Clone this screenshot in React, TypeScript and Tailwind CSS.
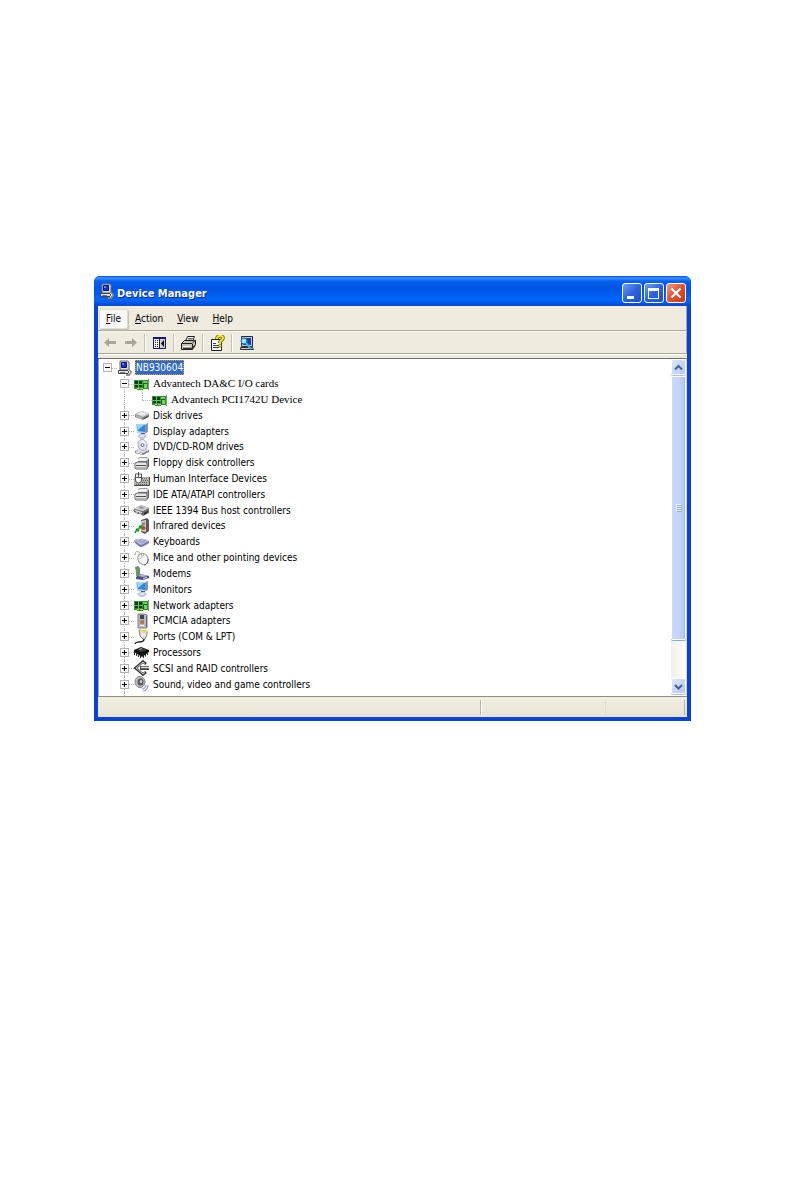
import type { ReactNode } from 'react';

type IconName =
  | 'computer'
  | 'card'
  | 'disk'
  | 'monitor'
  | 'cdrom'
  | 'controller'
  | 'hid'
  | 'firewire'
  | 'infrared'
  | 'keyboard'
  | 'mouse'
  | 'modem'
  | 'pcmcia'
  | 'port'
  | 'processor'
  | 'scsi'
  | 'sound';

const shapes: Record<IconName, ReactNode> = {
  computer: (
    <>
      <path d="M3 1h8l1 1v8H3z" fill="#dcdad2" stroke="#66666e" />
      <path d="M4.500 2.500h5v5h-5z" fill="#1030d8" stroke="#08106c" />
      <path d="M5 3h2v2H5z" fill="#6a88f8" />
      <path d="M1.500 10.500h10v3h-10z" fill="#e2dfd6" stroke="#44444a" />
      <path d="M3 12.500h5" stroke="#77777c" />
      <path d="M11 9l3 3-2 3h-3" fill="none" stroke="#8e8e8e" strokeWidth="2" />
      <path d="M11 10l2 2-2 2" fill="none" stroke="#f0f0f0" />
    </>
  ),
  card: (
    <>
      <path d="M0 4h14v9H9v1H3v-1H0z" fill="#2c9236" />
      <path d="M1 5h3v3H1zM5 5h3v3H5zM1 9h3v2H1zM5 9h3v2H5z" fill="#0e3a16" />
      <path d="M9 5h4v2H9zM10 8h3v4h-3z" fill="#74d452" />
      <path d="M0 8.500h9M4.500 4v8" stroke="#5fc05c" />
      <path d="M9 7.500h4M9.500 8v4" stroke="#14602a" />
      <path d="M14.500 3v11" stroke="#8d938d" />
      <path d="M3 12.500h2M6 12.500h3" stroke="#d8d04c" />
    </>
  ),
  disk: (
    <>
      <path d="M1 7l7-3 7 3v3l-6 3-8-3z" fill="#88888c" />
      <path d="M1 7l7-3 7 3-6 3z" fill="#d6d6d8" />
      <path d="M2 8l6 2v2L2 10z" fill="#b5b5b8" />
      <path d="M10 11l4-2v1l-4 2z" fill="#444" />
      <path d="M4 7l4-2 4 2-3 1z" fill="#f8f8f8" />
    </>
  ),
  monitor: (
    <>
      <path d="M2 1l9 0 3-1v9l-4 2-7-1z" fill="#b7cbe4" />
      <path d="M3 2h8v7l-7-1z" fill="#2e86e8" />
      <path d="M3 2h7L4 7z" fill="#86dcfa" />
      <path d="M11 2l3-2v9l-3 1z" fill="#8495b2" />
      <path d="M6 11h5l2 2-3 3H6l-3-3z" fill="#c4c8d8" />
      <path d="M6 13h4" stroke="#fff" />
      <path d="M7 10.500h4" stroke="#565e90" />
    </>
  ),
  cdrom: (
    <>
      <path d="M1 12l5-3 9 2v2l-6 3-8-2z" fill="#85858c" />
      <path d="M1 12l5-3 9 2-6 3z" fill="#dedee2" />
      <path d="M8 .5c3 0 5 3 5 6s-2 5-4 5-5-2-5-6 2-5 4-5z" fill="#dfe1f6" stroke="#a4a6bc" />
      <path d="M8 6V1a5 5 0 0 1 4 4z" fill="#fbfbff" />
      <circle cx="8.500" cy="6" r="1.500" fill="#fff" stroke="#7375a8" />
      <path d="M2 13l6 1.500" stroke="#fafafa" />
    </>
  ),
  controller: (
    <>
      <path d="M4 3l2-1h7l2 2v7l-2 2H4z" fill="#9a9a9c" />
      <path d="M4 4l2-1h7l1 1-2 2H3z" fill="#f0f0f0" />
      <path d="M4 6.500h9" stroke="#606064" />
      <path d="M1 8l3-1h8l1 2v5H2l-1-1z" fill="#e4e4e4" stroke="#6e6e70" />
      <path d="M2 10.500h10" stroke="#505054" />
      <path d="M2 12.500h10" stroke="#b8b8ba" />
      <path d="M14.500 4v7l-1 2" fill="none" stroke="#606064" />
    </>
  ),
  hid: (
    <>
      <path d="M0 6h15v8H0z" fill="#b2b2ae" />
      <path d="M8 7.500h6M9 9.500h6M8 11.500h6M2 13.500h12" stroke="#62625e" strokeDasharray="1 1" />
      <path d="M1.500 3h6v6a3 3 0 0 1-6 0z" fill="#fafafa" stroke="#555" />
      <path d="M4.500 1v5M2 6.500h5" fill="none" stroke="#555" />
      <path d="M0 14.500h15.500V6" fill="none" stroke="#4c4c4a" />
    </>
  ),
  firewire: (
    <>
      <path d="M0 7l7-4 8 3v5l-6 3-3-2H4l-4-2z" fill="#6c6c70" />
      <path d="M0 7l7-4 8 3-6 3z" fill="#d2d2d4" />
      <path d="M4 6l3-2 4 2-3 1z" fill="#9a9a9c" />
      <path d="M1 8l7 2v1L1 9z" fill="#ececee" />
      <path d="M10 11l4-2v1l-4 3z" fill="#222" />
      <path d="M3 9v2M6 10v2" stroke="#eee" />
    </>
  ),
  infrared: (
    <>
      <path d="M7 2l6-2 2 2v11l-4 3-4-2z" fill="#5c5a5a" />
      <path d="M7 3l5-1v12l-5-1z" fill="#cccbcb" />
      <path d="M8 5l3-1v3l-3 1z" fill="#8a8888" />
      <circle cx="9.500" cy="10" r="2" fill="#e03a22" />
      <path d="M1 15l2-4 1 2 2-5 1 2 1-3" fill="none" stroke="#149a1c" strokeWidth="1.500" />
    </>
  ),
  keyboard: (
    <>
      <path d="M0 6l5-1h6l4 2v2l-3 2-4 2H6L1 9z" fill="#7c7cac" />
      <path d="M0 6l5-1h6l4 2-8 4z" fill="#cdcdf0" />
      <path d="M2 6l7 3M5 5.500l6 3M8 5.500l5 2M3 8l5-3M5 9l6-3M7 10l6-3" stroke="#9494c4" strokeWidth="0.700" />
    </>
  ),
  mouse: (
    <>
      <path d="M1 5c0-5 4-4 6-1" fill="none" stroke="#9c9c9c" />
      <ellipse cx="9" cy="9" rx="5" ry="6" transform="rotate(-28 9 9)" fill="#f6f6f4" stroke="#949490" />
      <path d="M4 9c3 0 5-2 6-5M7 3l1 4" fill="none" stroke="#b8b8b4" />
      <path d="M14 9c0 4-2 6-4 6" fill="none" stroke="#5e5e5e" />
    </>
  ),
  modem: (
    <>
      <path d="M1 2l3-1 2 2v8l-3 1z" fill="#76847a" />
      <path d="M2 3l2-1v8l-2 1z" fill="#55a45e" />
      <path d="M2 12l5-3 8 2v2l-6 2-7-1z" fill="#4c4c84" />
      <path d="M4 11l4-2 6 2-5 1z" fill="#b4b4dc" />
      <path d="M9 13.500l4-1" stroke="#e4e4f4" />
    </>
  ),
  pcmcia: (
    <>
      <path d="M4 1h6l3 1v13H4z" fill="#bcbcbe" stroke="#7e7e82" />
      <path d="M6 2h4v4H6z" fill="#3a4264" />
      <path d="M6 7h4v4H6z" fill="#b8785a" />
      <path d="M6 12h4v1H6z" fill="#f0f0f0" />
      <path d="M12.500 3v11" stroke="#66666a" />
    </>
  ),
  port: (
    <>
      <path d="M5 1l8 1v4l-2 4H9L6 7z" fill="#dededa" stroke="#84847c" />
      <path d="M6 1.500l7 1" stroke="#e8dc5c" strokeWidth="2" />
      <path d="M7 6h5" stroke="#fff" />
      <path d="M10 10c0 3-3 3-5 3s-4 1-4 2" fill="none" stroke="#2b2b2b" strokeWidth="1.500" />
    </>
  ),
  processor: (
    <>
      <path d="M0 6l7-3 8 3v2l-7 5-8-5z" fill="#141414" />
      <path d="M3 6l5-2 5 2-5 2z" fill="#3c3c3c" />
      <path d="M.5 8v3M2.500 9v3M4.500 10v3M6.500 11v3M9.500 11v3M11.500 9.500v3M13.500 8v3" stroke="#2a2a2a" />
      <path d="M5 5.500l3-1" stroke="#bbb" />
    </>
  ),
  scsi: (
    <>
      <path d="M12 4L9 1.500 1.500 8 9 14.500l3-2.500" fill="none" stroke="#292929" strokeWidth="2.500" />
      <path d="M11 3.500L9 2 2 8l7 6 2-1.500" fill="none" stroke="#d4d4d4" />
      <path d="M6 6h9v4H6z" fill="#444" />
      <path d="M7 7.500h8" stroke="#ddd" strokeWidth="1.500" />
    </>
  ),
  sound: (
    <>
      <ellipse cx="6" cy="6" rx="5" ry="5.500" fill="#bcbcbe" stroke="#848488" />
      <ellipse cx="6.500" cy="6" rx="3" ry="3.500" fill="#58585c" />
      <ellipse cx="7" cy="5.500" rx="1.200" ry="1.500" fill="#d8d8dc" />
      <path d="M8 13c2 0 4-2 4-4M9 15c3 0 5-3 5-6" fill="none" stroke="#9c9cdf" strokeWidth="1.200" />
    </>
  ),
};

function DeviceIcon({ name }: { name: IconName }) {
  return (
    <svg viewBox="0 0 16 16" className="size-4 shrink-0" aria-hidden="true">
      {shapes[name]}
    </svg>
  );
}

type Device = {
  label: string;
  icon: IconName;
  level: 1 | 2;
  open?: boolean;
  serif?: boolean;
};

const devices: Device[] = [
  { label: 'Advantech DA&C I/O cards', icon: 'card', level: 1, open: true, serif: true },
  { label: 'Advantech PCI1742U Device', icon: 'card', level: 2, serif: true },
  { label: 'Disk drives', icon: 'disk', level: 1 },
  { label: 'Display adapters', icon: 'monitor', level: 1 },
  { label: 'DVD/CD-ROM drives', icon: 'cdrom', level: 1 },
  { label: 'Floppy disk controllers', icon: 'controller', level: 1 },
  { label: 'Human Interface Devices', icon: 'hid', level: 1 },
  { label: 'IDE ATA/ATAPI controllers', icon: 'controller', level: 1 },
  { label: 'IEEE 1394 Bus host controllers', icon: 'firewire', level: 1 },
  { label: 'Infrared devices', icon: 'infrared', level: 1 },
  { label: 'Keyboards', icon: 'keyboard', level: 1 },
  { label: 'Mice and other pointing devices', icon: 'mouse', level: 1 },
  { label: 'Modems', icon: 'modem', level: 1 },
  { label: 'Monitors', icon: 'monitor', level: 1 },
  { label: 'Network adapters', icon: 'card', level: 1 },
  { label: 'PCMCIA adapters', icon: 'pcmcia', level: 1 },
  { label: 'Ports (COM & LPT)', icon: 'port', level: 1 },
  { label: 'Processors', icon: 'processor', level: 1 },
  { label: 'SCSI and RAID controllers', icon: 'scsi', level: 1 },
  { label: 'Sound, video and game controllers', icon: 'sound', level: 1 },
];

function Expander({ open, label }: { open?: boolean; label: string }) {
  return (
    <button
      type="button"
      aria-label={`${open ? 'Collapse' : 'Expand'} ${label}`}
      className="relative flex size-[9px] shrink-0 items-center justify-center border border-[#b4b4ae] bg-white"
    >
      <svg viewBox="0 0 5 5" className="size-[5px]" aria-hidden="true">
        <path d={open ? 'M0 2h5v1H0z' : 'M0 2h5v1H0zM2 0h1v5H2z'} fill="#000" />
      </svg>
    </button>
  );
}

function Branch({ children, end }: { children?: ReactNode; end?: boolean }) {
  return (
    <span className="relative flex w-[18px] shrink-0 items-center self-stretch pl-1">
      <span
        className={`absolute top-0 left-2 border-l border-dotted border-[#b8b8b8] ${end ? 'bottom-1/2' : 'bottom-0'}`}
      />
      {(children || end) && (
        <span className="absolute top-1/2 right-0 left-2 border-t border-dotted border-[#b8b8b8]" />
      )}
      {children}
    </span>
  );
}

function DeviceRow({ device }: { device: Device }) {
  const { label, icon, level, open, serif } = device;
  return (
    <li role="treeitem" aria-level={level + 1} className="flex min-h-0 items-center pl-[17px]">
      {level === 1 ? (
        <Branch>
          <Expander open={open} label={label} />
        </Branch>
      ) : (
        <>
          <Branch />
          <Branch end />
        </>
      )}
      <DeviceIcon name={icon} />
      <span
        className={`pl-[3px] whitespace-nowrap ${serif ? 'font-["Liberation_Serif",serif] text-[11px]' : 'text-[10px]'}`}
      >
        {label}
      </span>
    </li>
  );
}

function TitleBar() {
  return (
    <header className="flex h-[30px] items-center rounded-t-md bg-[linear-gradient(#0a48d8_0,#3b93ff_2px,#0861f0_5px,#0054e4_12px,#0066fa_24px,#0047d0_30px)] pr-[5px] pl-[5px]">
      <DeviceIcon name="computer" />
      <h1 className="flex-1 pt-[5px] pl-[2px] text-[11px] leading-4 font-bold text-white [text-shadow:1px_1px_#0a2a90]">
        Device Manager
      </h1>
      <div className="flex gap-[2px] pt-1">
        <button
          type="button"
          aria-label="Minimize"
          className="size-5 rounded-[3px] border border-white bg-linear-to-br from-[#6f9df6] via-[#2f62e0] to-[#1f4fd6]"
        >
          <svg viewBox="0 0 18 18" aria-hidden="true">
            <path d="M4 12h7v3H4z" fill="#fff" />
          </svg>
        </button>
        <button
          type="button"
          aria-label="Maximize"
          className="size-5 rounded-[3px] border border-white bg-linear-to-br from-[#6f9df6] via-[#2f62e0] to-[#1f4fd6]"
        >
          <svg viewBox="0 0 18 18" aria-hidden="true">
            <path d="M3 4h11v11H3zM4 7v7h9V7z" fill="#fff" fillRule="evenodd" />
          </svg>
        </button>
        <button
          type="button"
          aria-label="Close"
          className="size-5 rounded-[3px] border border-white bg-linear-to-br from-[#f09a80] via-[#e0502c] to-[#c83810]"
        >
          <svg viewBox="0 0 18 18" aria-hidden="true">
            <path d="M4.500 4.500l9 9M13.500 4.500l-9 9" stroke="#fff" strokeWidth="2.200" />
          </svg>
        </button>
      </div>
    </header>
  );
}

function MenuBar() {
  const items = ['File', 'Action', 'View', 'Help'];
  return (
    <nav
      aria-label="Menu"
      className="flex h-[25px] items-center border-r border-b border-[#aca899] bg-[#efebde] pt-px pl-px"
    >
      {items.map((item, i) => (
        <button
          key={item}
          type="button"
          className={`h-5 rounded-[2px] border px-[6px] text-[10px] ${
            i === 0 ? 'border-[#dedbd0] bg-[#fbfaf8] shadow-[1px_1px_1px_#c5c1b2]' : 'border-transparent'
          }`}
        >
          <span className="underline underline-offset-1">{item[0]}</span>
          {item.slice(1)}
        </button>
      ))}
    </nav>
  );
}

function ToolButton({ label, disabled, children }: { label: string; disabled?: boolean; children: ReactNode }) {
  return (
    <button type="button" aria-label={label} disabled={disabled} className="flex h-5 w-[21px] items-center justify-center">
      <svg viewBox="0 0 16 16" className="size-4" aria-hidden="true">
        {children}
      </svg>
    </button>
  );
}

function Separator() {
  return <span className="mx-[3px] h-[18px] w-[2px] border-r border-l border-r-white border-l-[#c5c2b4]" />;
}

function Toolbar() {
  return (
    <div
      role="toolbar"
      aria-label="Tools"
      className="flex h-[23px] items-center border-t border-r border-b border-t-[#f8f6ee] border-r-[#aca899] border-b-[#aca899] bg-[#efebde] pl-px"
    >
      <ToolButton label="Back" disabled>
        <path d="M7 3v3h7v3H7v3L2 7.500z" fill="#aaa79a" />
      </ToolButton>
      <ToolButton label="Forward" disabled>
        <path d="M9 3v3H2v3h7v3l5-4.500z" fill="#aaa79a" />
      </ToolButton>
      <Separator />
      <ToolButton label="Show/Hide Console Tree">
        <path d="M1.500 2.500h12v11h-12z" fill="#fff" stroke="#16167e" />
        <path d="M1 2h13v2H1zM7 4h1v9H7z" fill="#16167e" />
        <path d="M3 5.500h1M5 5.500h1M3 7.500h1M5 7.500h1M3 9.500h1M5 9.500h1M3 11.500h1M5 11.500h1" stroke="#222" />
        <path d="M8 4h5v9H8z" fill="#d4d1c7" />
        <path d="M12 5v7L9 8.500z" fill="#000" />
      </ToolButton>
      <Separator />
      <ToolButton label="Print">
        <path d="M4.500 6.500l2-5h7l-2 5z" fill="#fff" stroke="#222" />
        <path d="M7 3.500h5M7 5h4" stroke="#666" />
        <path d="M.5 8.500l3-3h11v4l-3 5h-11z" fill="#c8c4b7" stroke="#181818" />
        <path d="M1 8.500h10l3-3M11.500 9v4" fill="none" stroke="#222" />
        <path d="M2 11.500h7" stroke="#f4f4f4" />
        <path d="M2 13.500h9l3-3" fill="none" stroke="#333" strokeWidth="1.500" />
      </ToolButton>
      <Separator />
      <ToolButton label="Properties">
        <path d="M1.500 4.500h8l2 2v9h-10z" fill="#fff" stroke="#222" />
        <path d="M3 8.500h3M3 10.500h6M3 12.500h6" stroke="#3b3b3b" />
        <path d="M7 4c0-4 6-4 6-1 0 2-3 2-3 5" fill="none" stroke="#5c5600" strokeWidth="3.500" />
        <path d="M7 4c0-4 6-4 6-1 0 2-3 2-3 5" fill="none" stroke="#f8ee22" strokeWidth="2" />
        <circle cx="10" cy="10.500" r="1.500" fill="#f8ee22" stroke="#5c5600" strokeWidth="0.700" />
      </ToolButton>
      <Separator />
      <ToolButton label="Scan for hardware changes">
        <path d="M2.500 1.500h11v10h-11z" fill="#c6c8d8" stroke="#25254a" />
        <path d="M4 3h8v7H4z" fill="#1c3cb0" />
        <path d="M1.500 12.500h12l1 2h-13z" fill="#c8c5ba" stroke="#333" />
        <circle cx="5" cy="6" r="3" fill="#8ee6f8" stroke="#1c6b8f" />
        <path d="M7 8l5 6" stroke="#37bce0" strokeWidth="2" />
      </ToolButton>
    </div>
  );
}

function ScrollArrow({ down }: { down?: boolean }) {
  return (
    <button
      type="button"
      aria-label={down ? 'Scroll down' : 'Scroll up'}
      className="flex h-4 w-full shrink-0 items-center justify-center rounded-[2px] border border-white bg-linear-to-br from-[#dce6ff] to-[#b4c8f8] shadow-[0_1px_#aebfe4]"
    >
      <svg viewBox="0 0 9 9" className="size-[9px]" aria-hidden="true">
        <path d={down ? 'M1 3l3.500 3.500L8 3' : 'M1 6.500L4.500 3 8 6.500'} fill="none" stroke="#4d6185" strokeWidth="2" />
      </svg>
    </button>
  );
}

function ScrollBar() {
  return (
    <div className="flex w-[15px] shrink-0 flex-col bg-linear-to-r from-[#f1f0ea] to-[#fefefb]">
      <ScrollArrow />
      <div className="flex flex-1 flex-col pt-px">
        <div className="flex h-[264px] items-center justify-center rounded-[2px] border border-white bg-linear-to-r from-[#cbd9ff] via-[#c4d4fe] to-[#b3c8f8] shadow-[0_1px_#8fa8dc,inset_-1px_0_#a5baea]">
          <svg viewBox="0 0 6 8" className="h-2 w-[6px]" aria-hidden="true">
            <path d="M0 .5h5M0 2.500h5M0 4.500h5M0 6.500h5" stroke="#eef4ff" />
            <path d="M1 1.500h5M1 3.500h5M1 5.500h5M1 7.500h5" stroke="#8cabe8" />
          </svg>
        </div>
      </div>
      <ScrollArrow down />
    </div>
  );
}

function DeviceTree() {
  return (
    <div className="flex border-t border-r border-t-[#716f64] border-r-[#dad7c8] bg-white">
      <div className="flex flex-1 flex-col border-l border-[#aca899] pt-px">
        <ul role="tree" aria-label="Devices" className="grid h-[332px] auto-rows-fr text-black">
          <li role="treeitem" aria-level={1} aria-selected="true" className="flex min-h-0 items-center">
            <span className="relative flex w-[18px] shrink-0 items-center pl-1">
              <span className="absolute top-1/2 right-0 left-2 border-t border-dotted border-[#b8b8b8]" />
              <Expander open label="NB930604" />
            </span>
            <DeviceIcon name="computer" />
            <span className="ml-[2px] h-[15px] border border-dotted border-[#d8a04a] bg-[#316ac5] text-[10px] leading-[13px] text-white">
              NB930604
            </span>
          </li>
          {devices.map((device) => (
            <DeviceRow key={device.label} device={device} />
          ))}
        </ul>
        <span className="ml-[25px] flex-1 border-l border-dotted border-[#b8b8b8]" />
      </div>
      <div className="flex pb-[2px]">
        <ScrollBar />
      </div>
    </div>
  );
}

export default function App() {
  return (
    <main className="min-h-screen bg-white pt-[276px] pr-[103px] pb-8 pl-[94px] font-['DejaVu_Sans_Condensed','DejaVu_Sans',sans-serif]">
      <section aria-label="Device Manager" className="rounded-t-md bg-[#0a41dc]">
        <TitleBar />
        <div className="border-x-4 border-b-4 border-[#0842dc] bg-[#efebde]">
          <MenuBar />
          <Toolbar />
          <div className="h-1 border-t border-white" />
          <div className="grid h-[338px]">
            <DeviceTree />
          </div>
          <footer className="flex h-[21px] border-t border-[#918e80] bg-linear-to-b from-[#f1eee2] to-[#e9e5d5] pt-[3px] pr-[2px] pb-[2px]">
            <span className="flex-1 border-r border-[#b5b2a3]" />
            <span className="w-[125px] border-r border-l border-r-[#dfdccd] border-l-white" />
            <span className="w-[79px] border-r border-[#b5b2a3]" />
          </footer>
        </div>
      </section>
    </main>
  );
}
